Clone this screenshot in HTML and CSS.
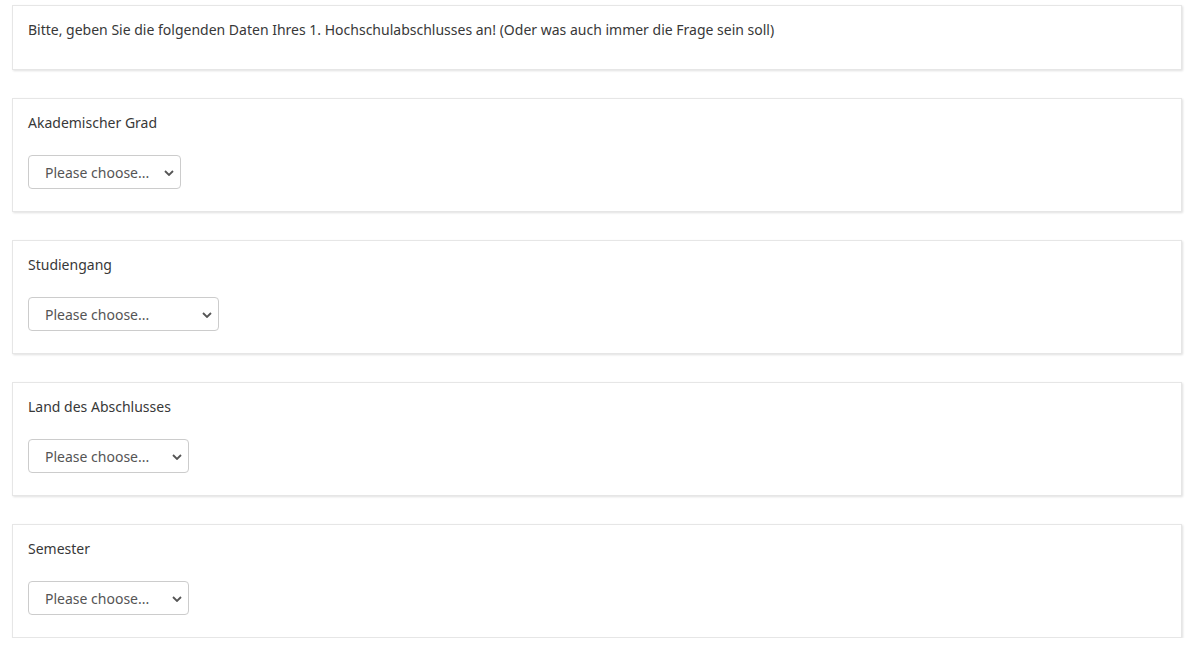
FILE: index.html
```html
<!DOCTYPE html>
<html lang="de">
<head>
<meta charset="utf-8">
<title>Hochschulabschluss</title>
<link rel="stylesheet" href="styles.css">
</head>
<body>
<main class="page">
  <section class="card card-intro">
    <p class="intro">Bitte, geben Sie die folgenden Daten Ihres 1. Hochschulabschlusses an! (Oder was auch immer die Frage sein soll)</p>
  </section>

  <section class="card">
    <label class="label" for="grad">Akademischer Grad</label>
    <div class="select-wrap w-grad">
      <select id="grad" class="select"><option>Please choose...</option></select>
      <svg class="chev" width="10" height="6" viewBox="0 0 10 6"><path d="M1 1 L5 5 L9 1" fill="none" stroke="#555" stroke-width="1.8"/></svg>
    </div>
  </section>

  <section class="card">
    <label class="label" for="studiengang">Studiengang</label>
    <div class="select-wrap w-studiengang">
      <select id="studiengang" class="select"><option>Please choose...</option></select>
      <svg class="chev" width="10" height="6" viewBox="0 0 10 6"><path d="M1 1 L5 5 L9 1" fill="none" stroke="#555" stroke-width="1.8"/></svg>
    </div>
  </section>

  <section class="card">
    <label class="label" for="land">Land des Abschlusses</label>
    <div class="select-wrap w-land">
      <select id="land" class="select"><option>Please choose...</option></select>
      <svg class="chev" width="10" height="6" viewBox="0 0 10 6"><path d="M1 1 L5 5 L9 1" fill="none" stroke="#555" stroke-width="1.8"/></svg>
    </div>
  </section>

  <section class="card">
    <label class="label" for="semester">Semester</label>
    <div class="select-wrap w-semester">
      <select id="semester" class="select"><option>Please choose...</option></select>
      <svg class="chev" width="10" height="6" viewBox="0 0 10 6"><path d="M1 1 L5 5 L9 1" fill="none" stroke="#555" stroke-width="1.8"/></svg>
    </div>
  </section>
</main>
</body>
</html>
```

FILE: styles.css
```css
html, body {
  margin: 0;
  padding: 0;
  background: #fff;
}
body {
  font-family: "Noto Sans", "Open Sans", sans-serif;
  font-size: 14px;
  line-height: 21px;
  color: #383838;
}
.page {
  padding: 5px 0 0 12px;
  width: 1170px;
  display: flex;
  flex-direction: column;
  gap: 28px;
}
.card {
  box-sizing: border-box;
  background: #fff;
  border: 1px solid #e6e6e6;
  box-shadow: 1px 1px 2px rgba(0, 0, 0, 0.12);
  padding: 13px 15px 22px;
  height: 114px;
  display: flex;
  flex-direction: column;
  align-items: flex-start;
}
.card-intro {
  height: 65px;
}
.intro {
  margin: 0;
}
.label {
  display: block;
  margin-bottom: 22px;
}
.select-wrap {
  position: relative;
  height: 34px;
}
.select {
  -webkit-appearance: none;
  appearance: none;
  box-sizing: border-box;
  width: 100%;
  height: 34px;
  margin: 0;
  padding: 0 30px 0 16px;
  font-family: inherit;
  font-size: 14px;
  color: #555;
  background: #fff;
  border: 1px solid #ccc;
  border-radius: 4px;
  outline: none;
}
.chev {
  position: absolute;
  right: 7px;
  top: 15px;
  pointer-events: none;
}
.w-grad { width: 153px; }
.w-studiengang { width: 191px; }
.w-land { width: 161px; }
.w-semester { width: 161px; }
```
